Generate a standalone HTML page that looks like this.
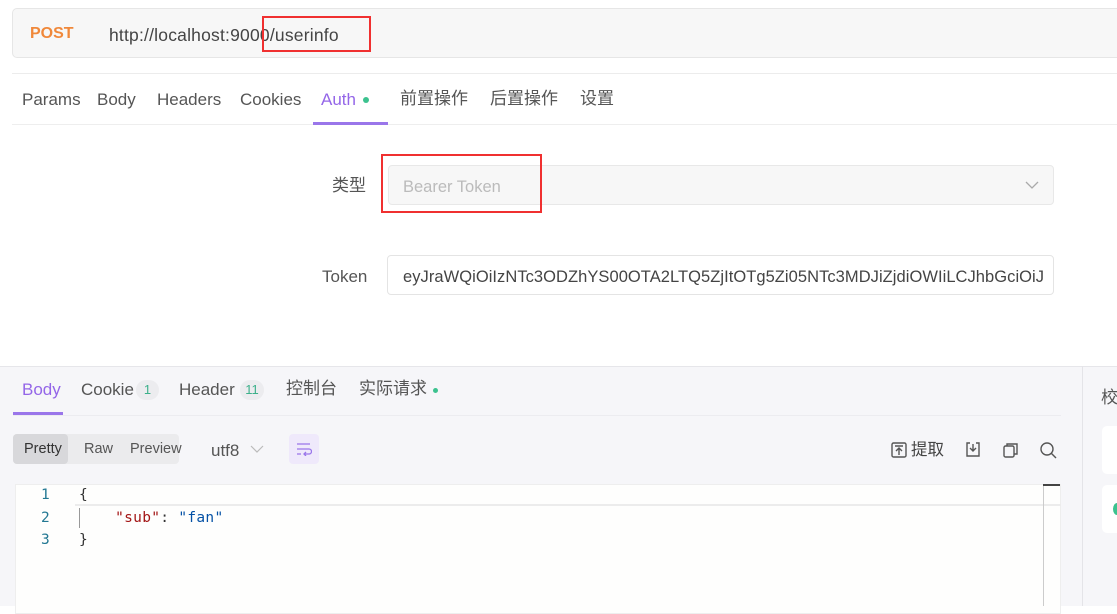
<!DOCTYPE html><html><head><meta charset="utf-8"><style>
*{box-sizing:border-box;margin:0;padding:0}
body{width:1117px;height:606px;overflow:hidden;background:#fff;font-family:"Liberation Sans","Noto Sans CJK SC",sans-serif;position:relative;color:#555}
.a{position:absolute}
.t{font-size:17px;white-space:nowrap;line-height:20px}
.c{font-family:"Noto Sans CJK SC",sans-serif;margin-top:-3px}
</style></head><body>
<div class="a" style="left:12px;top:8px;width:1120px;height:50px;background:#f7f7f7;border:1px solid #e6e6e6;border-radius:5px"></div>
<div class="a t" style="left:30px;top:24px;color:#f0883a;font-weight:bold;font-size:16px">POST</div>
<div class="a t" style="left:109px;top:25px;color:#444;font-size:17.5px;letter-spacing:0.2px">http://localhost:9000/userinfo</div>
<div class="a" style="left:262px;top:16px;width:109px;height:36px;border:2px solid #f03030"></div>
<div class="a" style="left:12px;top:73px;width:1105px;height:1px;background:#ececec"></div>
<div class="a t" style="left:22px;top:90px">Params</div>
<div class="a t" style="left:97px;top:90px">Body</div>
<div class="a t" style="left:157px;top:90px">Headers</div>
<div class="a t" style="left:240px;top:90px">Cookies</div>
<div class="a t" style="left:321px;top:90px;color:#9466e8">Auth</div>
<div class="a" style="left:363px;top:97px;width:6px;height:6px;border-radius:50%;background:#3cc28f"></div>
<div class="a t c" style="left:400px;top:90px">前置操作</div>
<div class="a t c" style="left:490px;top:90px">后置操作</div>
<div class="a t c" style="left:580px;top:90px">设置</div>
<div class="a" style="left:12px;top:124px;width:1105px;height:1px;background:#eeeeee"></div>
<div class="a" style="left:313px;top:122px;width:75px;height:3px;background:#9a76ea"></div>
<div class="a t c" style="left:332px;top:177px">类型</div>
<div class="a" style="left:388px;top:165px;width:666px;height:40px;background:#f7f7f7;border:1px solid #e8e8e8;border-radius:4px"></div>
<div class="a t" style="left:403px;top:177px;color:#bbb;font-size:16.5px">Bearer Token</div>
<svg class="a" style="left:1025px;top:180px" width="14" height="10"><path d="M1 2l6 6 6-6" fill="none" stroke="#aaa" stroke-width="1.3"/></svg>
<div class="a" style="left:381px;top:154px;width:161px;height:59px;border:2px solid #f03030"></div>
<div class="a t" style="left:322px;top:267px">Token</div>
<div class="a" style="left:387px;top:255px;width:667px;height:40px;background:#fff;border:1px solid #e4e4e4;border-radius:4px"></div>
<div class="a t" style="left:403px;top:267px;color:#444;font-size:16.5px;letter-spacing:0.05px">eyJraWQiOiIzNTc3ODZhYS00OTA2LTQ5ZjItOTg5Zi05NTc3MDJiZjdiOWIiLCJhbGciOiJ</div>
<div class="a" style="left:0;top:366px;width:1117px;height:240px;background:#f6f6f9;border-top:1px solid #e6e6ea"></div>
<div class="a" style="left:1082px;top:366px;width:1px;height:240px;background:#e4e4e8"></div>
<div class="a t c" style="left:1101px;top:389px">校</div>
<div class="a" style="left:1102px;top:426px;width:20px;height:48px;background:#fff;border-radius:5px"></div>
<div class="a" style="left:1102px;top:485px;width:20px;height:48px;background:#fff;border-radius:5px"></div>
<div class="a" style="left:1113px;top:503px;width:8px;height:12px;border-radius:50%;background:#3cc28f"></div>
<div class="a t" style="left:22px;top:380px;color:#9466e8">Body</div>
<div class="a" style="left:13px;top:412px;width:50px;height:3px;background:#9a76ea"></div>
<div class="a" style="left:13px;top:415px;width:1048px;height:1px;background:#ececf0"></div>
<div class="a t" style="left:81px;top:380px">Cookie</div>
<div class="a" style="left:136px;top:380px;width:23px;height:20px;border-radius:10px;background:#ececef;color:#3cb08a;font-size:13px;text-align:center;line-height:20px">1</div>
<div class="a t" style="left:179px;top:380px">Header</div>
<div class="a" style="left:240px;top:380px;width:24px;height:20px;border-radius:10px;background:#ececef;color:#3cb08a;font-size:13px;text-align:center;line-height:20px">11</div>
<div class="a t c" style="left:286px;top:380px">控制台</div>
<div class="a t c" style="left:359px;top:380px">实际请求</div>
<div class="a" style="left:433px;top:388px;width:5px;height:5px;border-radius:50%;background:#3cc28f"></div>
<div class="a" style="left:13px;top:434px;width:166px;height:30px;background:#ebebed;border-radius:4px"></div>
<div class="a" style="left:13px;top:434px;width:55px;height:30px;background:#d8d8db;border-radius:4px"></div>
<div class="a" style="left:24px;top:441px;font-size:14.5px;color:#333">Pretty</div>
<div class="a" style="left:84px;top:441px;font-size:14.5px;color:#555">Raw</div>
<div class="a" style="left:130px;top:441px;font-size:14.5px;color:#555">Preview</div>
<div class="a t" style="left:211px;top:441px;font-size:17px">utf8</div>
<svg class="a" style="left:250px;top:445px" width="14" height="9"><path d="M1 1l6 6 6-6" fill="none" stroke="#bbb" stroke-width="1.2"/></svg>
<div class="a" style="left:289px;top:434px;width:30px;height:30px;background:#efe9fb;border-radius:4px"></div>
<svg class="a" style="left:296px;top:442px" width="16" height="14"><path d="M1 2h13M1 7h12a2.5 2.5 0 0 1 0 5H8M10 10l-2 2 2 2M1 12h4" fill="none" stroke="#9a76ea" stroke-width="1.3"/></svg>
<svg class="a" style="left:891px;top:442px" width="16" height="16"><rect x="1" y="1" width="14" height="14" rx="1.5" fill="none" stroke="#555" stroke-width="1.4"/><path d="M4 4h8M8 13V6M5 9l3-3 3 3" fill="none" stroke="#555" stroke-width="1.4"/></svg>
<div class="a t c" style="left:911px;top:441px;font-size:16.5px;color:#444">提取</div>
<svg class="a" style="left:965px;top:442px" width="16" height="16"><path d="M5 1H2v13h12V1h-3M8 2v7M5 6l3 3 3-3" fill="none" stroke="#555" stroke-width="1.4"/></svg>
<svg class="a" style="left:1003px;top:442px" width="16" height="16"><rect x="1" y="4" width="10" height="11" rx="1.5" fill="none" stroke="#555" stroke-width="1.4"/><path d="M4 4V2h10v10h-3" fill="none" stroke="#555" stroke-width="1.4"/></svg>
<svg class="a" style="left:1040px;top:442px" width="17" height="17"><circle cx="7" cy="7" r="6" fill="none" stroke="#555" stroke-width="1.4"/><path d="M11 11l5 5" stroke="#555" stroke-width="1.4"/></svg>
<div class="a" style="left:15px;top:484px;width:1046px;height:130px;background:#fefefd;border:1px solid #eeeeee"></div>
<div class="a" style="left:75px;top:485px;width:986px;height:21px;border-bottom:2px solid #ececec"></div>
<div class="a" style="left:1043px;top:484px;width:1px;height:122px;background:#ccc"></div>
<div class="a" style="left:1043px;top:484px;width:17px;height:2px;background:#444"></div>
<div class="a" style="left:79px;top:508px;width:1px;height:20px;background:#999"></div>
<div class="a" style="font-family:'DejaVu Sans Mono',monospace;font-size:14.5px;line-height:22.5px;left:41px;top:484px;color:#237893">1<br>2<br>3</div>
<div class="a" style="font-family:'DejaVu Sans Mono',monospace;font-size:14.5px;line-height:22.5px;left:79px;top:484px;color:#333;white-space:pre;letter-spacing:0.3px">{
    <span style="color:#a31515">"sub"</span>: <span style="color:#0451a5">"fan"</span>
}</div>
</body></html>
